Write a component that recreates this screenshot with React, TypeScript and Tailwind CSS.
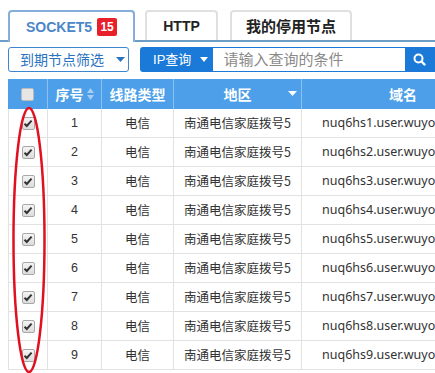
import React from "react";

const rows = [1, 2, 3, 4, 5, 6, 7, 8, 9];

function Check({ checked }: { checked: boolean }) {
  return (
    <span className="inline-flex h-[13px] w-[13px] items-center justify-center rounded-[2px] border border-[#a8a8a8] bg-gradient-to-b from-[#f4f4f4] to-[#dcdcdc]">
      {checked && (
        <svg width="10" height="9" viewBox="0 0 10 9">
          <path d="M1.5 4.8 L3.8 7 L8.6 1.6" fill="none" stroke="#333" strokeWidth="2" />
        </svg>
      )}
    </span>
  );
}

export default function App() {
  const cjk = { fontFamily: '"Noto Sans CJK SC", "Liberation Sans", sans-serif' };
  return (
    <div className="relative h-[373px] w-[435px] overflow-hidden bg-white" style={cjk}>
      {/* tabs */}
      <div className="flex h-[42px] items-end gap-[10px] border-b-2 border-[#6d9cc6] pl-[8px]">
        <div className="-mb-[2px] flex h-[32px] w-[127px] items-center justify-center gap-[5px] rounded-t-[4px] border-2 border-b-0 border-[#86aedb] bg-white">
          <span className="text-[14px] font-bold text-[#4a86c8]" style={{ fontFamily: '"Liberation Sans", sans-serif' }}>SOCKET5</span>
          <span className="flex h-[18px] w-[20px] items-center justify-center rounded-[2px] bg-[#e8202a] text-[12px] font-bold text-white" style={{ fontFamily: '"Liberation Sans", sans-serif' }}>15</span>
        </div>
        <div className="mb-0 flex h-[30px] w-[73px] items-center justify-center rounded-t-[4px] border-2 border-b-0 border-[#e0e0e0] bg-white">
          <span className="text-[14px] font-bold text-[#222]" style={{ fontFamily: '"Liberation Sans", sans-serif' }}>HTTP</span>
        </div>
        <div className="mb-0 ml-[2px] flex h-[30px] w-[122px] items-center justify-center rounded-t-[4px] border-2 border-b-0 border-[#e0e0e0] bg-white">
          <span className="text-[15px] font-bold text-[#222]">我的停用节点</span>
        </div>
      </div>

      {/* toolbar */}
      <div className="mt-[5px] flex h-[25px] items-center pl-[8px]">
        <div className="flex h-[25px] w-[124px] items-center rounded-[3px] border border-[#3d86d2] pl-[11px]">
          <span className="text-[14px] text-[#2a73c0]">到期节点筛选</span>
          <svg className="ml-[12px]" width="9" height="5" viewBox="0 0 9 5"><path d="M0 0 H9 L4.5 5 Z" fill="#2a73c0" /></svg>
        </div>
        <div className="ml-[11px] flex h-[25px] w-[73px] items-center rounded-l-[3px] bg-[#1b7ad8] pl-[13px]">
          <span className="text-[13px] text-white" style={{ fontFamily: '"Liberation Sans", "Noto Sans CJK SC", sans-serif' }}>IP查询</span>
          <svg className="ml-[9px]" width="8" height="5" viewBox="0 0 8 5"><path d="M0 0 H8 L4 5 Z" fill="#fff" /></svg>
        </div>
        <div className="flex h-[25px] w-[199px] items-center border border-[#1b7ad8] bg-white pl-[11px]">
          <span className="text-[15px] text-[#8a8a8a]">请输入查询的条件</span>
        </div>
        <div className="flex h-[25px] w-[30px] items-center bg-[#1b7ad8] pl-[7px]">
          <svg width="13" height="13" viewBox="0 0 13 13">
            <circle cx="5.5" cy="5.5" r="4" fill="none" stroke="#fff" strokeWidth="2" />
            <path d="M8.5 8.5 L11.5 11.5" stroke="#fff" strokeWidth="2.4" strokeLinecap="round" />
          </svg>
        </div>
      </div>

      {/* table */}
      <div className="ml-[8px] mt-[7px] w-[520px]">
        <div className="flex h-[30px] bg-[#4c9fe8] text-[14px] font-bold text-white">
          <div className="flex w-[40px] items-center justify-center border-r border-[#8cc0f0]">
            <span className="h-[13px] w-[13px] rounded-[2px] border border-[#bbb] bg-[#e6e6e6]" />
          </div>
          <div className="flex w-[54px] items-center justify-center gap-[3px] border-r border-[#8cc0f0]">
            <span>序号</span>
            <svg width="7" height="12" viewBox="0 0 7 12"><path d="M0 5 L3.5 0 L7 5 Z M0 7 L3.5 12 L7 7 Z" fill="#a9cdf2" /></svg>
          </div>
          <div className="flex w-[72px] items-center justify-center border-r border-[#8cc0f0]">线路类型</div>
          <div className="relative flex w-[128px] items-center justify-center border-r border-[#8cc0f0]">
            <span>地区</span>
            <svg className="absolute right-[4px] top-[12px]" width="9" height="5" viewBox="0 0 9 5"><path d="M0 0 H9 L4.5 5 Z" fill="#fff" /></svg>
          </div>
          <div className="flex w-[202px] items-center justify-center">域名</div>
        </div>
        {rows.map((n) => (
          <div key={n} className="flex h-[29px] border-b border-[#e2e2e2] text-[12.5px] text-[#333]">
            <div className="flex w-[40px] items-center justify-center border-x border-[#e2e2e2]">
              <Check checked />
            </div>
            <div className="flex w-[54px] items-center justify-center border-r border-[#e2e2e2]" style={{ fontFamily: '"Liberation Sans", sans-serif' }}>{n}</div>
            <div className="flex w-[72px] items-center justify-center border-r border-[#e2e2e2]">电信</div>
            <div className="flex w-[128px] items-center justify-center border-r border-[#e2e2e2]">南通电信家庭拨号5</div>
            <div className="flex w-[202px] items-center pl-[20px] whitespace-nowrap" style={{ fontFamily: '"Noto Sans", sans-serif' }}>nuq6hs{n}.user.wuyouip.com</div>
          </div>
        ))}
      </div>

      {/* red annotation ellipse */}
      <svg className="absolute left-0 top-0" width="60" height="373" viewBox="0 0 60 373">
        <ellipse cx="29" cy="240" rx="15.5" ry="132" fill="none" stroke="#e01020" strokeWidth="2.5" />
      </svg>
    </div>
  );
}
